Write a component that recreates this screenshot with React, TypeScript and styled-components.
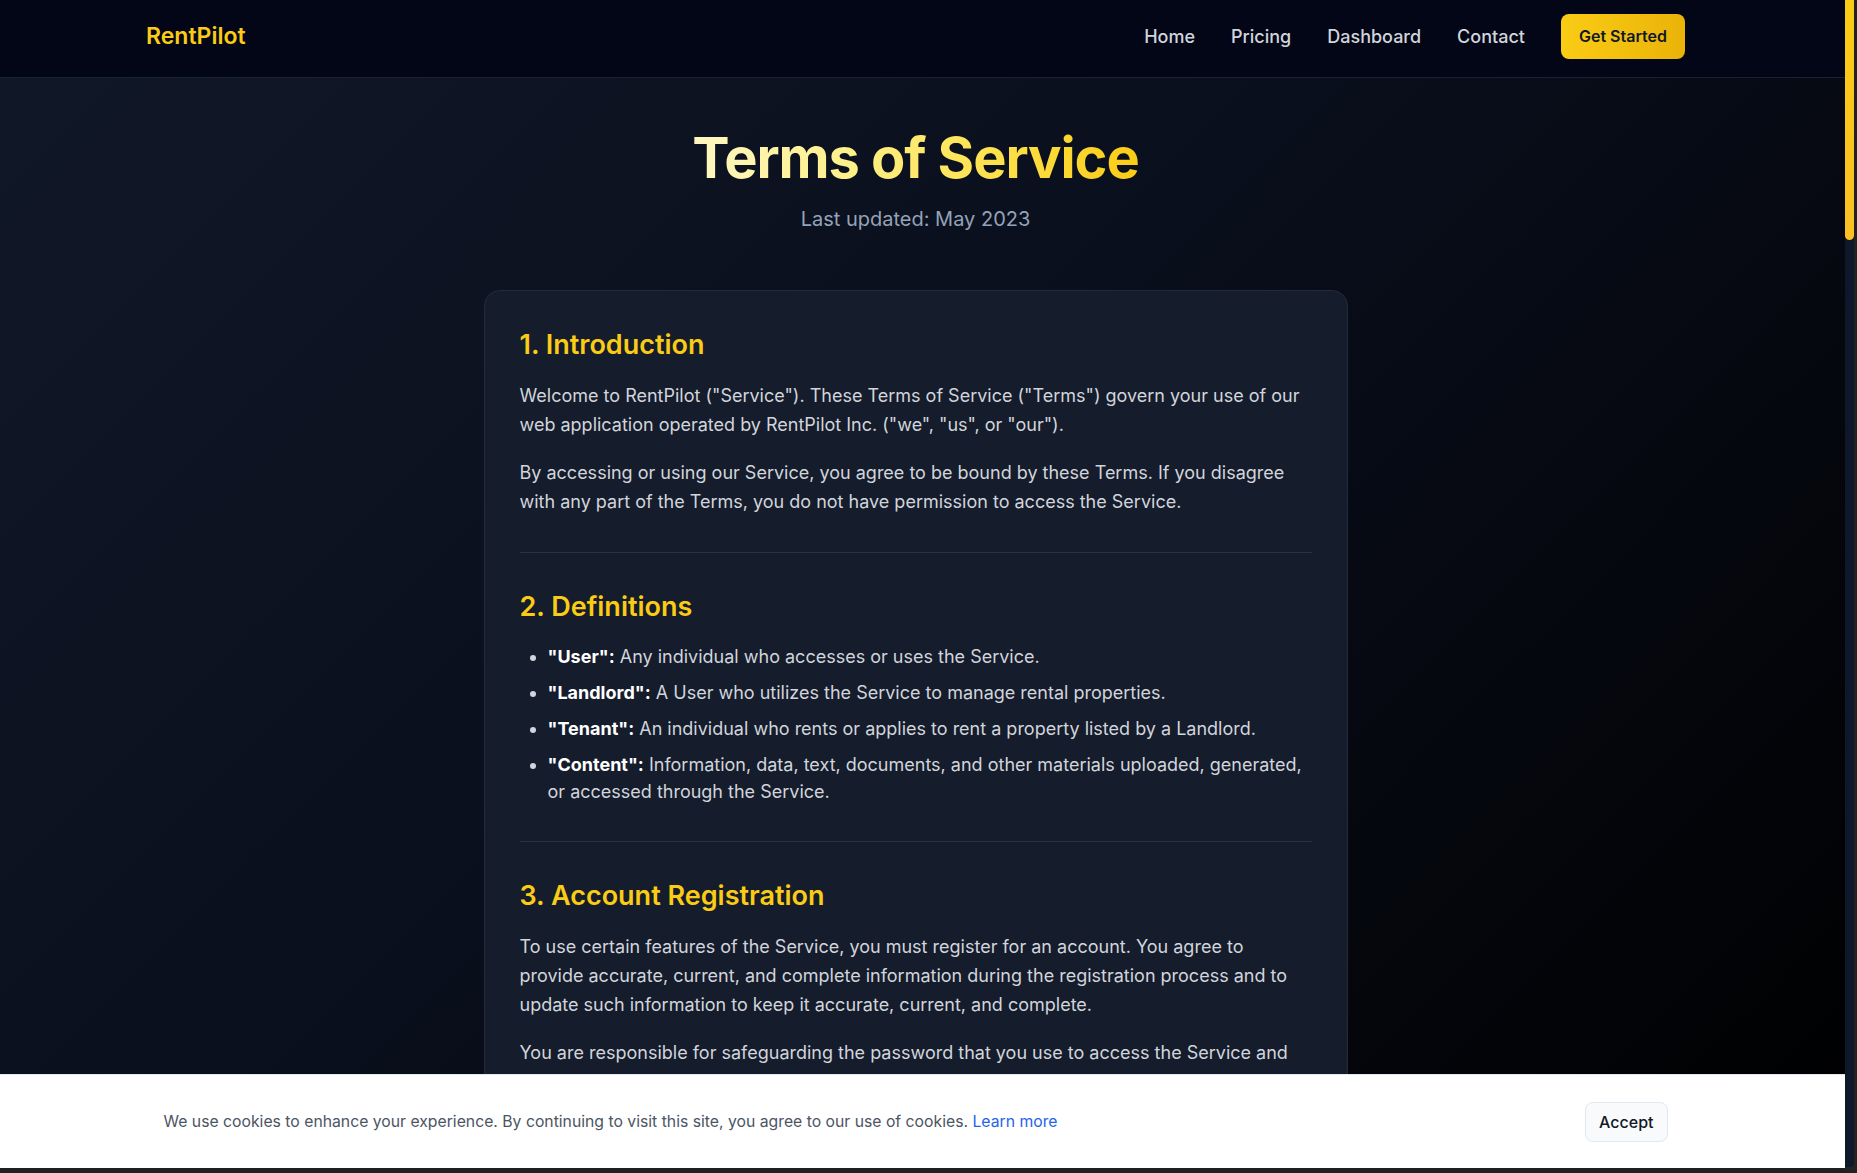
import React from "react";
import styled, { createGlobalStyle } from "styled-components";

const GlobalStyle = createGlobalStyle`
  html, body {
    margin: 0;
    padding: 0;
  }
  html {
    scrollbar-width: none;
  }
  body {
    font-family: Inter, "Noto Sans", sans-serif;
    color: #d1d5db;
    background: linear-gradient(135deg, #111827 0%, #0a0f1d 45%, #000000 100%) fixed;
    background-color: #000;
  }
  * { box-sizing: border-box; }
`;

const Nav = styled.header`
  background: #030616;
  border-bottom: 1px solid #1a2131;
  padding: 14px 26px 18px 0;
`;

const NavInner = styled.div`
  max-width: 1539px;
  margin: 0 auto;
  display: flex;
  align-items: center;
  justify-content: space-between;
`;

const Logo = styled.a`
  font-size: 23px;
  font-weight: 600;
  color: #facc15;
  text-decoration: none;
  line-height: 1.2;
`;

const NavLinks = styled.nav`
  display: flex;
  align-items: center;
  gap: 36px;
`;

const NavLink = styled.a`
  font-size: 18px;
  font-weight: 500;
  color: #d1d5db;
  text-decoration: none;
  line-height: 1.5;
`;

const CtaButton = styled.button`
  font-family: inherit;
  font-size: 16px;
  font-weight: 600;
  line-height: 25px;
  color: #111827;
  background: linear-gradient(90deg, #facc15 0%, #eab308 100%);
  border: none;
  border-radius: 8px;
  padding: 10px 18px;
  cursor: pointer;
`;

const Main = styled.main`
  padding: 47px 26px 96px 0;
`;

const Container = styled.div`
  max-width: 896px;
  margin: 0 auto;
  padding: 0 16px;
`;

const Hero = styled.div`
  text-align: center;
  margin-bottom: 56px;
`;

const Title = styled.h1`
  margin: 0 0 12px;
  font-size: 56px;
  font-weight: 700;
  line-height: 1.2;
  letter-spacing: -1.1px;
  background: linear-gradient(90deg, #fff7c2 0%, #fef08a 35%, #fde047 70%, #facc15 100%);
  -webkit-background-clip: text;
  background-clip: text;
  color: transparent;
  display: inline-block;
`;

const Subtitle = styled.p`
  margin: 0;
  font-size: 20px;
  line-height: 1.5;
  color: #94a3b8;
`;

const Card = styled.article`
  background: #151c2c;
  border: 1px solid #232b3b;
  border-radius: 16px;
  padding: 37px 35px 36px;
`;

const Section = styled.section`
  padding-bottom: 36px;
  margin-bottom: 37px;
  border-bottom: 1px solid #2a3345;
  &:last-child {
    padding-bottom: 0;
    margin-bottom: 0;
    border-bottom: none;
  }
`;

const Heading = styled.h2`
  margin: 0 0 20px;
  font-size: 27px;
  font-weight: 600;
  line-height: 34px;
  color: #facc15;
`;

const Para = styled.p`
  margin: 0 0 19px;
  font-size: 18px;
  line-height: 1.6;
  color: #d1d5db;
  &:last-child {
    margin-bottom: 0;
  }
`;

const List = styled.ul`
  margin: -1px 0 0;
  padding-left: 28px;
`;

const Item = styled.li`
  font-size: 18px;
  line-height: 1.5;
  margin-bottom: 9px;
  color: #d1d5db;
  &:last-child {
    margin-bottom: 0;
  }
`;

const Term = styled.strong`
  color: #ffffff;
  font-weight: 700;
`;

const Footer = styled.footer`
  border-top: 1px solid #1a2131;
  padding: 40px 26px 140px 0;
  background: #030616;
`;

const FooterInner = styled.div`
  max-width: 1536px;
  margin: 0 auto;
  padding: 0 16px;
  display: flex;
  justify-content: space-between;
  color: #6b7280;
  font-size: 15px;
`;

const Banner = styled.div`
  position: fixed;
  left: 0;
  right: 0;
  bottom: 0;
  background: #ffffff;
  border-top: 1px solid #e2e8f0;
  border-bottom: 5px solid #202020;
  padding: 27px 26px 26px 0;
`;

const BannerInner = styled.div`
  max-width: 1536px;
  margin: 0 auto;
  padding: 0 16px;
  display: flex;
  align-items: center;
  justify-content: space-between;
`;

const BannerText = styled.p`
  margin: 0;
  font-size: 15.75px;
  line-height: 1.5;
  color: #4b5563;
`;

const BannerLink = styled.a`
  color: #2563eb;
  text-decoration: none;
`;

const AcceptButton = styled.button`
  font-family: inherit;
  font-size: 16px;
  font-weight: 500;
  line-height: 24px;
  color: #111827;
  background: #f8fafc;
  border: 1px solid #e2e8f0;
  border-radius: 8px;
  padding: 7px 13px;
  cursor: pointer;
`;

const ScrollRail = styled.div`
  position: fixed;
  top: 0;
  right: 0;
  bottom: 0;
  width: 12px;
  background: #222222;
  padding: 0 3px 6px 0;
  z-index: 20;
`;

const RailTrack = styled.div`
  height: 100%;
  background: #0f172a;
  border-bottom-right-radius: 4px;
`;

const RailThumb = styled.div`
  height: 240px;
  background: linear-gradient(180deg, #facc15 0%, #fbbf24 100%);
  border-radius: 0 0 5px 5px;
`;

type Block =
  | { kind: "p"; text: string }
  | { kind: "ul"; items: { term?: string; text: string }[] };

const sections: { title: string; blocks: Block[] }[] = [
  {
    title: "1. Introduction",
    blocks: [
      {
        kind: "p",
        text: 'Welcome to RentPilot ("Service"). These Terms of Service ("Terms") govern your use of our web application operated by RentPilot Inc. ("we", "us", or "our").',
      },
      {
        kind: "p",
        text: "By accessing or using our Service, you agree to be bound by these Terms. If you disagree with any part of the Terms, you do not have permission to access the Service.",
      },
    ],
  },
  {
    title: "2. Definitions",
    blocks: [
      {
        kind: "ul",
        items: [
          { term: '"User":', text: " Any individual who accesses or uses the Service." },
          { term: '"Landlord":', text: " A User who utilizes the Service to manage rental properties." },
          { term: '"Tenant":', text: " An individual who rents or applies to rent a property listed by a Landlord." },
          {
            term: '"Content":',
            text: " Information, data, text, documents, and other materials uploaded, generated, or accessed through the Service.",
          },
        ],
      },
    ],
  },
  {
    title: "3. Account Registration",
    blocks: [
      {
        kind: "p",
        text: "To use certain features of the Service, you must register for an account. You agree to provide accurate, current, and complete information during the registration process and to update such information to keep it accurate, current, and complete.",
      },
      {
        kind: "p",
        text: "You are responsible for safeguarding the password that you use to access the Service and for any activities or actions under your password. You agree not to disclose your password to any third party.",
      },
    ],
  },
  {
    title: "4. Subscriptions and Payments",
    blocks: [
      {
        kind: "p",
        text: "Some parts of the Service are billed on a subscription basis. You will be billed in advance on a recurring and periodic basis, depending on the subscription plan you select when purchasing a subscription.",
      },
      {
        kind: "p",
        text: "At the end of each billing period, your subscription will automatically renew under the exact same conditions unless you cancel it or RentPilot Inc. cancels it. You may cancel your subscription renewal through your account settings page.",
      },
      {
        kind: "p",
        text: "All fees are non-refundable except as required by law or as expressly stated in these Terms.",
      },
    ],
  },
  {
    title: "5. Landlord Responsibilities",
    blocks: [
      {
        kind: "p",
        text: "Landlords using the Service are solely responsible for complying with all applicable laws, regulations, and ordinances related to the rental of their properties, including but not limited to fair housing laws, security deposit regulations, and habitability standards.",
      },
      {
        kind: "ul",
        items: [
          { text: "Providing accurate descriptions of listed properties." },
          { text: "Handling tenant information in accordance with applicable privacy laws." },
          { text: "Maintaining records of rent payments and lease agreements." },
          { text: "Responding to maintenance requests in a timely manner." },
        ],
      },
    ],
  },
  {
    title: "6. Tenant Screening",
    blocks: [
      {
        kind: "p",
        text: "The Service may provide tools for tenant screening, including background checks and credit reports provided by third-party partners. Landlords must obtain proper consent from applicants before requesting any screening report and must use such reports only for lawful purposes.",
      },
      {
        kind: "p",
        text: "RentPilot Inc. does not make any rental decisions and is not responsible for the accuracy of information provided by third-party screening providers.",
      },
    ],
  },
  {
    title: "7. User Content",
    blocks: [
      {
        kind: "p",
        text: "Our Service allows you to upload, store, and share Content. You are responsible for the Content that you post to the Service, including its legality, reliability, and appropriateness.",
      },
      {
        kind: "p",
        text: "By uploading Content to the Service, you grant us a limited license to use, store, and process such Content solely for the purpose of providing and improving the Service. You retain all of your rights to any Content you submit.",
      },
    ],
  },
  {
    title: "8. Prohibited Uses",
    blocks: [
      { kind: "p", text: "You agree not to use the Service:" },
      {
        kind: "ul",
        items: [
          { text: "In any way that violates any applicable national or international law or regulation." },
          { text: "To transmit any advertising or promotional material without our prior written consent." },
          { text: "To impersonate or attempt to impersonate RentPilot Inc., an employee, another user, or any other person." },
          { text: "To engage in any conduct that restricts or inhibits anyone's use or enjoyment of the Service." },
          { text: "To attempt to gain unauthorized access to any part of the Service or its related systems." },
        ],
      },
    ],
  },
  {
    title: "9. Intellectual Property",
    blocks: [
      {
        kind: "p",
        text: "The Service and its original content (excluding Content provided by users), features, and functionality are and will remain the exclusive property of RentPilot Inc. and its licensors. Our trademarks may not be used in connection with any product or service without our prior written consent.",
      },
    ],
  },
  {
    title: "10. Termination",
    blocks: [
      {
        kind: "p",
        text: "We may terminate or suspend your account immediately, without prior notice or liability, for any reason whatsoever, including without limitation if you breach the Terms.",
      },
      {
        kind: "p",
        text: "Upon termination, your right to use the Service will immediately cease. If you wish to terminate your account, you may simply discontinue using the Service or delete your account from the settings page.",
      },
    ],
  },
  {
    title: "11. Limitation of Liability",
    blocks: [
      {
        kind: "p",
        text: "In no event shall RentPilot Inc., nor its directors, employees, partners, agents, suppliers, or affiliates, be liable for any indirect, incidental, special, consequential, or punitive damages, including without limitation, loss of profits, data, use, goodwill, or other intangible losses, resulting from your access to or use of or inability to access or use the Service.",
      },
    ],
  },
  {
    title: "12. Disclaimer",
    blocks: [
      {
        kind: "p",
        text: 'Your use of the Service is at your sole risk. The Service is provided on an "AS IS" and "AS AVAILABLE" basis. The Service is provided without warranties of any kind, whether express or implied, including, but not limited to, implied warranties of merchantability, fitness for a particular purpose, non-infringement, or course of performance.',
      },
    ],
  },
  {
    title: "13. Governing Law",
    blocks: [
      {
        kind: "p",
        text: "These Terms shall be governed and construed in accordance with the laws of the State of Delaware, United States, without regard to its conflict of law provisions.",
      },
      {
        kind: "p",
        text: "Our failure to enforce any right or provision of these Terms will not be considered a waiver of those rights.",
      },
    ],
  },
  {
    title: "14. Changes to Terms",
    blocks: [
      {
        kind: "p",
        text: "We reserve the right, at our sole discretion, to modify or replace these Terms at any time. If a revision is material, we will try to provide at least 30 days' notice prior to any new terms taking effect.",
      },
      {
        kind: "p",
        text: "By continuing to access or use our Service after those revisions become effective, you agree to be bound by the revised terms.",
      },
    ],
  },
  {
    title: "15. Contact Us",
    blocks: [
      {
        kind: "p",
        text: "If you have any questions about these Terms, please contact us at legal@rentpilot.com or through the contact form on our website.",
      },
    ],
  },
];

export default function App() {
  return (
    <>
      <GlobalStyle />
      <Nav>
        <NavInner>
          <Logo href="#">RentPilot</Logo>
          <NavLinks>
            <NavLink href="#">Home</NavLink>
            <NavLink href="#">Pricing</NavLink>
            <NavLink href="#">Dashboard</NavLink>
            <NavLink href="#">Contact</NavLink>
            <CtaButton>Get Started</CtaButton>
          </NavLinks>
        </NavInner>
      </Nav>
      <Main>
        <Container>
          <Hero>
            <Title>Terms of Service</Title>
            <Subtitle>Last updated: May 2023</Subtitle>
          </Hero>
          <Card>
            {sections.map((s) => (
              <Section key={s.title}>
                <Heading>{s.title}</Heading>
                {s.blocks.map((b, i) =>
                  b.kind === "p" ? (
                    <Para key={i}>{b.text}</Para>
                  ) : (
                    <List key={i}>
                      {b.items.map((it, j) => (
                        <Item key={j}>
                          {it.term && <Term>{it.term}</Term>}
                          {it.text}
                        </Item>
                      ))}
                    </List>
                  )
                )}
              </Section>
            ))}
          </Card>
        </Container>
      </Main>
      <Footer>
        <FooterInner>
          <span>© 2023 RentPilot Inc. All rights reserved.</span>
          <span>Privacy Policy · Terms of Service</span>
        </FooterInner>
      </Footer>
      <Banner>
        <BannerInner>
          <BannerText>
            We use cookies to enhance your experience. By continuing to visit this site, you agree to our use of
            cookies. <BannerLink href="#">Learn more</BannerLink>
          </BannerText>
          <AcceptButton>Accept</AcceptButton>
        </BannerInner>
      </Banner>
      <ScrollRail>
        <RailTrack>
          <RailThumb />
        </RailTrack>
      </ScrollRail>
    </>
  );
}
